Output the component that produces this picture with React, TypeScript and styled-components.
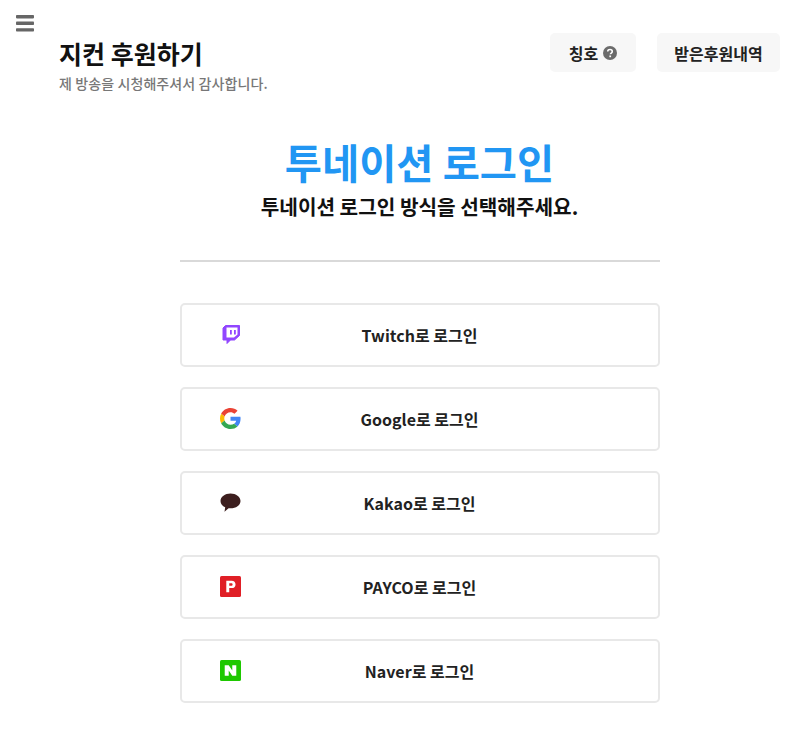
import React from "react";
import styled, { createGlobalStyle } from "styled-components";

const Global = createGlobalStyle`
  html, body { margin: 0; padding: 0; background: #fff; }
  body { font-family: "Noto Sans CJK KR", "Noto Sans", sans-serif; color: #111; }
`;
const Page = styled.div`
  position: relative;
  width: 795px;
  height: 741px;
  overflow: hidden;
  box-sizing: border-box;
  padding: 33px 15px 0 59px;
`;
const Menu = styled.button`
  position: absolute;
  left: 16px;
  top: 15px;
  width: 18px;
  height: 17px;
  padding: 0;
  border: 0;
  background: none;
  color: #666;
  display: flex;
`;
const Header = styled.header`
  display: flex;
  justify-content: space-between;
  align-items: flex-start;
  height: 70px;
`;
const TitleBlock = styled.div`
  display: flex;
  flex-direction: column;
`;
const Title = styled.h1`
  margin: 0;
  font-size: 25px;
  line-height: 41px;
  font-weight: 700;
  color: #111;
`;
const Subtitle = styled.p`
  margin: -1px 0 0;
  font-size: 14px;
  line-height: 20px;
  letter-spacing: 0.1px;
  font-weight: 500;
  color: #777;
`;
const Actions = styled.div`
  display: flex;
  gap: 21px;
`;
const ActionButton = styled.button<{ $w: number }>`
  width: ${(p) => p.$w}px;
  height: 39px;
  border: 0;
  border-radius: 5px;
  background: #f7f7f7;
  font: 700 16px "Noto Sans CJK KR", sans-serif;
  color: #222;
  display: flex;
  align-items: center;
  justify-content: center;
  gap: 5px;
  padding: 0;
`;
const Main = styled.main`
  width: 480px;
  margin: 0 auto;
  display: flex;
  flex-direction: column;
`;
const Heading = styled.h2`
  margin: 25px 0 0;
  text-align: center;
  font-size: 40.4px;
  line-height: 68px;
  font-weight: 700;
  color: #2196f3;
`;
const SubHeading = styled.p`
  margin: -4px 0 0;
  text-align: center;
  font-size: 20.2px;
  line-height: 30px;
  font-weight: 700;
  color: #111;
`;
const Divider = styled.hr`
  width: 100%;
  margin: 38px 0 41px;
  border: 0;
  border-top: 2px solid #d9d9d9;
`;
const List = styled.div`
  display: flex;
  flex-direction: column;
  gap: 20px;
`;
const LoginButton = styled.button`
  position: relative;
  width: 480px;
  height: 64px;
  box-sizing: border-box;
  border: 2px solid #e8e8e8;
  border-radius: 5px;
  background: #fff;
  padding: 0;
  font: 700 16px "Noto Sans CJK KR", sans-serif;
  color: #222;
  display: flex;
  align-items: center;
  justify-content: center;
`;
const IconSlot = styled.span`
  position: absolute;
  left: 38px;
  top: calc(50% - 12px);
  width: 22px;
  height: 22px;
  display: flex;
  align-items: center;
  justify-content: center;
`;

const Bars = () => (
  <svg width="18" height="17" viewBox="0 0 18 17" fill="currentColor">
    <rect x="0" y="0" width="18" height="3.4" rx="0.8" />
    <rect x="0" y="6.6" width="18" height="3.4" rx="0.8" />
    <rect x="0" y="13.2" width="18" height="3.4" rx="0.8" />
  </svg>
);
const Help = () => (
  <svg width="14" height="14" viewBox="0 0 13 13">
    <circle cx="6.5" cy="6.5" r="6.5" fill="#6b6b6b" />
    <path d="M4.4 5.1c0-1.2 1-1.9 2.1-1.9s2.1.7 2.1 1.8c0 1.5-1.700 1.500-1.700 2.700" fill="none" stroke="#fff" strokeWidth="1.5" />
    <rect x="5.9" y="8.8" width="1.6" height="1.6" fill="#fff" />
  </svg>
);
const Twitch = () => (
  <svg width="18" height="19" viewBox="0 0 18 19">
    <path d="M3.500 0.500H17.500V10.500L12.500 15H8.500L5 18.500V15H1V3Z" fill="#9146ff" stroke="#9146ff" strokeLinejoin="round" />
    <path d="M4.500 2.500H15.500V9.500L12 12.500H4.500Z" fill="#fff" />
    <rect x="8" y="5" width="1.8" height="4.500" fill="#9146ff" />
    <rect x="12" y="5" width="1.8" height="4.500" fill="#9146ff" />
  </svg>
);
const Google = () => (
  <svg width="21" height="21" viewBox="0 0 48 48">
    <path fill="#EA4335" d="M24 9.500c3.500 0 6.700 1.200 9.200 3.600l6.900-6.900C35.900 2.400 30.500 0 24 0 14.600 0 6.500 5.400 2.600 13.200l8 6.200C12.500 13.600 17.800 9.500 24 9.500z" />
    <path fill="#4285F4" d="M47 24.500c0-1.600-.1-3.100-.4-4.500H24v9h12.900c-.6 3-2.200 5.500-4.700 7.200l7.700 6C44.400 38 47 31.800 47 24.500z" />
    <path fill="#FBBC05" d="M10.600 28.600c-.5-1.400-.8-3-.8-4.600s.3-3.200.8-4.600l-8-6.200C.9 16.500 0 20.100 0 24s.9 7.500 2.600 10.800l8-6.200z" />
    <path fill="#34A853" d="M24 48c6.500 0 11.900-2.100 15.900-5.800l-7.700-6c-2.200 1.500-4.900 2.300-8.200 2.300-6.200 0-11.500-4.100-13.400-9.900l-8 6.200C6.500 42.600 14.600 48 24 48z" />
  </svg>
);
const Kakao = () => (
  <svg width="21" height="19" viewBox="0 0 21 19">
    <path d="M10.500 0.500C5 0.500 .5 3.900 .5 8c0 2.700 1.900 5 4.700 6.300L4.500 18.800 8.600 15.200c.6.100 1.300.1 1.900.1 5.500 0 10-3.300 10-7.400S16 .5 10.500.5z" fill="#3c1e1e" />
  </svg>
);
const Payco = () => (
  <svg width="21" height="21" viewBox="0 0 20 20">
    <rect width="20" height="20" rx="1.5" fill="#e01f26" />
    <path d="M6 4.500h5c2.500 0 3.800 1.400 3.800 3.500s-1.400 3.500-3.800 3.500H8.800V15.500H6Zm2.800 2.300v2.400h1.900c.9 0 1.300-.5 1.300-1.200s-.4-1.200-1.300-1.200Z" fill="#fff" fillRule="evenodd" />
  </svg>
);
const Naver = () => (
  <svg width="21" height="21" viewBox="0 0 20 20">
    <rect width="20" height="20" rx="1.500" fill="#1ec800" />
    <path d="M4.500 5H8.300L11.700 10V5H15.500V15H11.700L8.300 10V15H4.500Z" fill="#fff" />
  </svg>
);

const providers: [string, React.ReactNode][] = [
  ["Twitch", <Twitch />],
  ["Google", <Google />],
  ["Kakao", <Kakao />],
  ["PAYCO", <Payco />],
  ["Naver", <Naver />],
];

export default function App() {
  return (
    <Page>
      <Global />
      <Menu aria-label="menu"><Bars /></Menu>
      <Header>
        <TitleBlock>
          <Title>지컨 후원하기</Title>
          <Subtitle>제 방송을 시청해주셔서 감사합니다.</Subtitle>
        </TitleBlock>
        <Actions>
          <ActionButton $w={86}>칭호 <Help /></ActionButton>
          <ActionButton $w={123}>받은후원내역</ActionButton>
        </Actions>
      </Header>
      <Main>
        <Heading>투네이션 로그인</Heading>
        <SubHeading>투네이션 로그인 방식을 선택해주세요.</SubHeading>
        <Divider />
        <List>
          {providers.map(([name, icon]) => (
            <LoginButton key={name}>
              <IconSlot>{icon}</IconSlot>
              {name}로 로그인
            </LoginButton>
          ))}
        </List>
      </Main>
    </Page>
  );
}
